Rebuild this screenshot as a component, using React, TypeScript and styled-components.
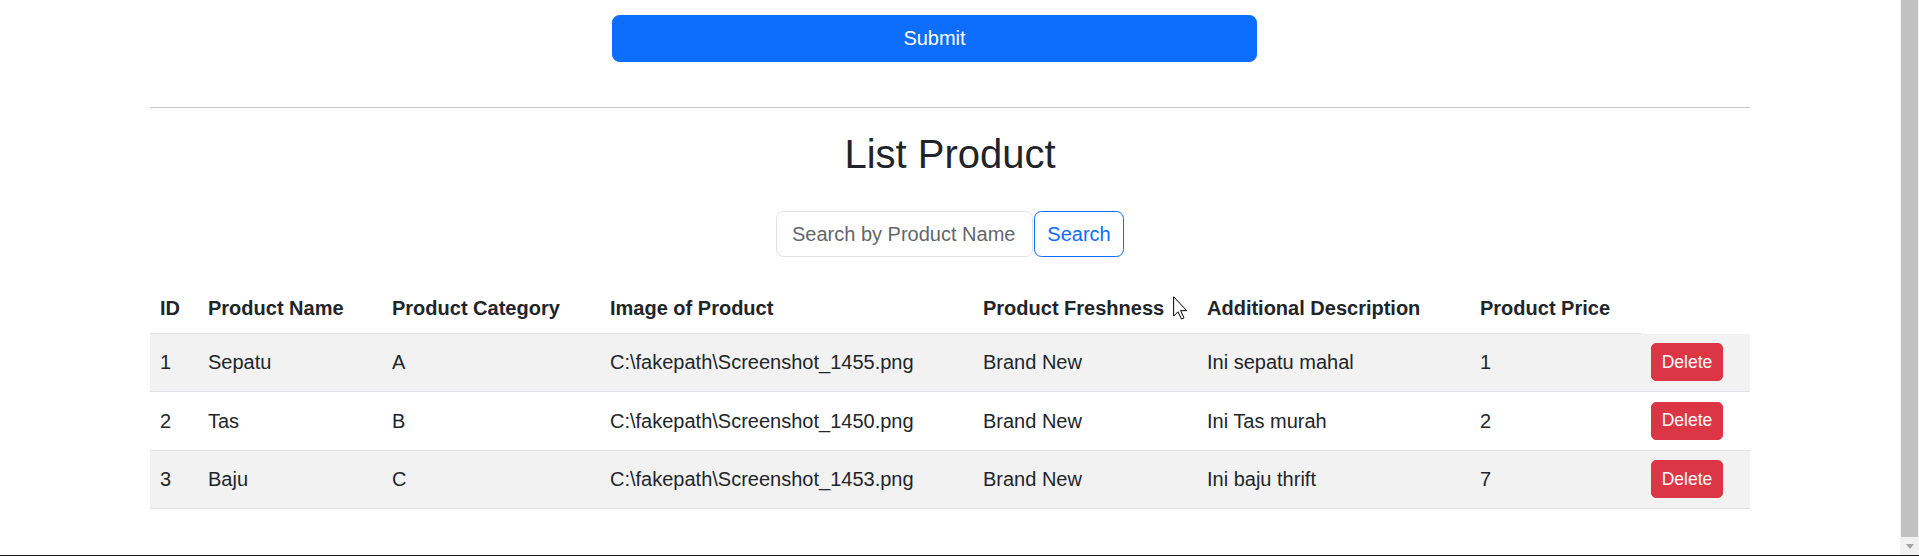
import styled, { createGlobalStyle } from "styled-components";

const GlobalStyle = createGlobalStyle`
  body {
    margin: 0;
    font-family: "Liberation Sans", Arial, sans-serif;
    color: #212529;
    background-color: #fff;
  }
  * {
    box-sizing: border-box;
  }
`;

const Frame = styled.div`
  display: flex;
  height: 556px;
  overflow: hidden;
  border-bottom: 1px solid #1b1b1b;
`;
const Page = styled.div`
  flex: 1;
  position: relative;
`;
const Container = styled.div`
  width: 1600px;
  margin: 0 auto;
`;
const SubmitRow = styled.div`
  padding-top: 15px;
  padding-left: 462px;
`;
const SubmitButton = styled.button`
  width: 645px;
  height: 47px;
  border: 1px solid #0d6efd;
  border-radius: 7.5px;
  background-color: #0d6efd;
  color: #fff;
  font-family: inherit;
  font-size: 20px;
  cursor: pointer;
`;
const Divider = styled.hr`
  margin: 45px 0 0;
  border: 0;
  border-top: 1px solid #c8c9ca;
`;
const Title = styled.h2`
  margin: 22px 0 33px;
  font-size: 40px;
  line-height: 48px;
  font-weight: 500;
  text-align: center;
`;
const SearchBar = styled.form`
  display: flex;
  justify-content: center;
  margin-bottom: 26px;
`;
const SearchInput = styled.input`
  width: 257px;
  height: 46px;
  padding: 0 15px;
  border: 1px solid #dee2e6;
  border-radius: 7.5px;
  font-family: inherit;
  font-size: 20px;
  color: #212529;
  outline: none;

  &::placeholder {
    color: #62676b;
  }
`;
const SearchButton = styled.button`
  width: 90px;
  height: 46px;
  margin-left: 1px;
  border: 1px solid #0d6efd;
  border-radius: 7.5px;
  background-color: #fff;
  color: #0d6efd;
  font-family: inherit;
  font-size: 20px;
  cursor: pointer;
`;
const Table = styled.table`
  width: 1600px;
  table-layout: fixed;
  border-collapse: collapse;
  font-size: 20px;
  line-height: 30px;
  vertical-align: top;
`;
const HeadCell = styled.th`
  padding: 10px;
  text-align: left;
  font-weight: 700;
  border-bottom: 1px solid #dee2e6;
  white-space: nowrap;
`;
const Row = styled.tr<{ $striped: boolean }>`
  background-color: ${(p) => (p.$striped ? "#f2f2f2" : "#fff")};
  border-bottom: 1px solid #dee2e6;
`;
const Cell = styled.td`
  padding: 9.5px 10px 10px;
  white-space: nowrap;
`;
const DeleteButton = styled.button`
  width: 72px;
  height: 38px;
  padding: 0;
  border: 1px solid #dc3545;
  border-radius: 5px;
  background-color: #dc3545;
  color: #fff;
  font-family: inherit;
  font-size: 17.5px;
  cursor: pointer;
`;
const Cursor = styled.svg`
  position: absolute;
  left: 1173px;
  top: 296px;
  width: 15px;
  height: 24px;
`;
const Scrollbar = styled.div`
  width: 19px;
  display: flex;
  flex-direction: column;
  background-color: #f1f1f1;
`;
const Thumb = styled.div`
  flex: 1;
  margin: 0 1px;
  background-color: #c1c1c1;
`;
const ArrowButton = styled.div`
  height: 18px;
  display: flex;
  justify-content: center;
  align-items: center;

  &::after {
    content: "";
    border-top: 5px solid #a3a3a3;
    border-left: 4.5px solid transparent;
    border-right: 4.5px solid transparent;
  }
`;

const columns = [
  { title: "ID", width: 48 },
  { title: "Product Name", width: 184 },
  { title: "Product Category", width: 218 },
  { title: "Image of Product", width: 373 },
  { title: "Product Freshness", width: 224 },
  { title: "Additional Description", width: 273 },
  { title: "Product Price", width: 171 },
];

const products = [
  { id: 1, name: "Sepatu", category: "A", image: "C:\\fakepath\\Screenshot_1455.png", freshness: "Brand New", description: "Ini sepatu mahal", price: 1 },
  { id: 2, name: "Tas", category: "B", image: "C:\\fakepath\\Screenshot_1450.png", freshness: "Brand New", description: "Ini Tas murah", price: 2 },
  { id: 3, name: "Baju", category: "C", image: "C:\\fakepath\\Screenshot_1453.png", freshness: "Brand New", description: "Ini baju thrift", price: 7 },
];

export default function App() {
  return (
    <>
      <GlobalStyle />
      <Frame>
        <Page>
          <Container>
            <SubmitRow>
              <SubmitButton type="button">Submit</SubmitButton>
            </SubmitRow>
            <Divider />
            <Title>List Product</Title>
            <SearchBar onSubmit={(e) => e.preventDefault()}>
              <SearchInput placeholder="Search by Product Name" />
              <SearchButton type="submit">Search</SearchButton>
            </SearchBar>
            <Table>
              <colgroup>
                {columns.map((c) => (
                  <col key={c.title} style={{ width: c.width }} />
                ))}
                <col style={{ width: 109 }} />
              </colgroup>
              <thead>
                <tr>
                  {columns.map((c) => (
                    <HeadCell key={c.title}>{c.title}</HeadCell>
                  ))}
                </tr>
              </thead>
              <tbody>
                {products.map((p, i) => (
                  <Row key={p.id} $striped={i % 2 === 0}>
                    <Cell>{p.id}</Cell>
                    <Cell>{p.name}</Cell>
                    <Cell>{p.category}</Cell>
                    <Cell>{p.image}</Cell>
                    <Cell>{p.freshness}</Cell>
                    <Cell>{p.description}</Cell>
                    <Cell>{p.price}</Cell>
                    <Cell>
                      <DeleteButton type="button">Delete</DeleteButton>
                    </Cell>
                  </Row>
                ))}
              </tbody>
            </Table>
          </Container>
          <Cursor viewBox="0 0 12 19">
            <path d="M0.5 0.5 L0.5 16 L4 12.5 L6.8 18.3 L8.8 17.4 L6.1 11.6 L11 11.6 Z" fill="#fff" stroke="#000" strokeWidth="0.8" strokeLinejoin="miter" />
          </Cursor>
        </Page>
        <Scrollbar>
          <Thumb />
          <ArrowButton />
        </Scrollbar>
      </Frame>
    </>
  );
}
